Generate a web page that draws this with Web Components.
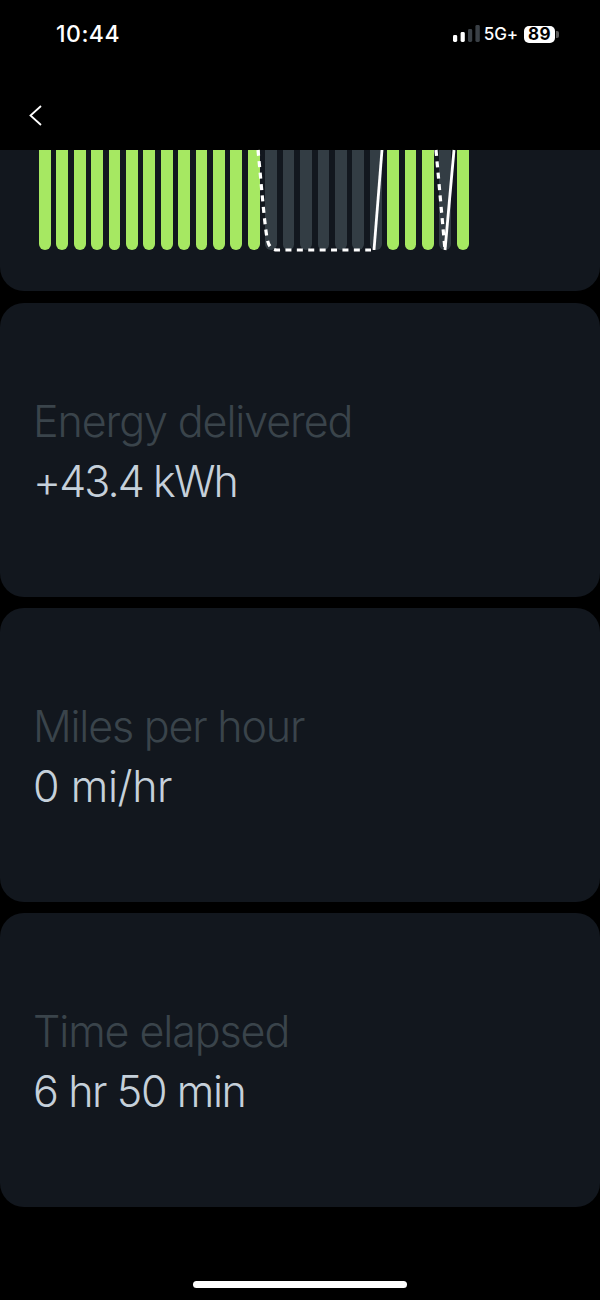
<!DOCTYPE html>
<html><head><meta charset="utf-8"><style>
html,body{margin:0;padding:0;background:#000}
body{width:600px;height:1300px;overflow:hidden;font-family:Inter,"Liberation Sans",sans-serif}
</style></head><body>
<app-screen>
  <status-bar></status-bar>
  <nav-bar></nav-bar>
  <chart-card></chart-card>
  <stat-card label="Energy delivered" value="+43.4 kWh" style="--ll:-1.1px;--lv:-1.9px"></stat-card>
  <stat-card label="Miles per hour" value="0 mi/hr" style="--ll:-1.2px;--lv:-.4px"></stat-card>
  <stat-card label="Time elapsed" value="6 hr 50 min" style="--ll:-1.1px;--lv:-1.4px"></stat-card>
  <home-indicator></home-indicator>
</app-screen>
<script>
function def(name, html, init){
  customElements.define(name, class extends HTMLElement{
    connectedCallback(){
      if(this.shadowRoot) return;
      const r=this.attachShadow({mode:'open'});
      r.innerHTML=html;
      if(init) init(r,this);
    }
  });
}
def('app-screen',`<style>:host{display:flex;flex-direction:column;width:600px;height:1300px;background:#000}</style><slot></slot>`);
def('status-bar',`<style>
:host{display:flex;align-items:center;justify-content:space-between;height:68px;box-sizing:border-box;padding:0 41px 0 56px;color:#fff;flex:none}
.t{font:500 23px/1 Inter,sans-serif;letter-spacing:.5px;opacity:.999}
.r{display:flex;align-items:center;height:68px}
.sig{display:block;margin-right:4px}
.g{font:500 17px/1 Inter,sans-serif;margin-right:6px;letter-spacing:-.1px;opacity:.999}
.bat{display:flex;align-items:center}
.pill{width:31px;height:17px;border-radius:5px;background:#fff;color:#000;font:700 17px/17px Inter,sans-serif;text-align:center;letter-spacing:.4px}
.nub{width:3px;height:7px;margin-left:1px;border-radius:0 2px 2px 0;background:#5a5a5a}
</style>
<span class="t">10:44</span>
<div class="r">
<svg class="sig" width="27" height="18" viewBox="0 0 27 18"><rect x="0" y="10" width="4.2" height="7" rx="1.4" fill="#fff"/><rect x="7.6" y="7" width="4.2" height="10" rx="1.4" fill="#fff"/><rect x="15" y="4" width="4.2" height="13" rx="1.4" fill="#3a4046"/><rect x="22.4" y="0" width="4.4" height="17" rx="1.4" fill="#3a4046"/></svg>
<span class="g">5G+</span>
<div class="bat"><div class="pill">89</div><div class="nub"></div></div>
</div>`);
def('nav-bar',`<style>:host{display:flex;align-items:flex-start;height:82px;padding:37px 0 0 29px;flex:none;box-sizing:border-box}svg{display:block}</style>
<svg width="13" height="21" viewBox="0 0 13 21"><path d="M12 1 L1.5 10.5 L12 20" fill="none" stroke="#fff" stroke-width="1.8"/></svg>`);
def('chart-bar',`<style>:host{display:block;width:11.8px;height:100px;background:var(--c);border-radius:0 0 6px 6px;flex:none}</style>`);
def('chart-card',`<style>
:host{display:block;height:141px;box-sizing:border-box;background:#12171e;border-radius:0 0 24px 24px;padding-left:39px;flex:none;margin-bottom:12px}
.wrap{position:relative;width:430px;height:100px}
.bars{display:flex;gap:5.62px;height:100px}
svg{position:absolute;left:0;top:0;overflow:visible}
</style>
<div class="wrap"><div class="bars"></div>
<svg width="430" height="102" viewBox="0 0 430 102" fill="none" stroke="#fff">
<path d="M219 0 C222 30 225 70 228 88 Q230 100 238 100 L332 100" stroke-width="3.2" stroke-dasharray="6 5.4"/>
<path d="M397 0 L406 100" stroke-width="3.2" stroke-dasharray="6 5.4"/>
<path d="M335 100 L343 0" stroke-width="2.8"/>
<path d="M406 100 L415 0" stroke-width="2.8"/>
</svg></div>`,r=>{
  const seq='GGGGGGGGGGGGGDDDDDDDGGGDG';
  const b=r.querySelector('.bars');
  for(const s of seq){const e=document.createElement('chart-bar');e.style.setProperty('--c',s=='G'?'#a6e862':'#333d44');b.append(e);}
});
def('stat-card',`<style>
:host{display:flex;flex-direction:column;justify-content:center;height:294px;box-sizing:border-box;background:#12171e;border-radius:24px;padding:2px 33px 0;flex:none;margin-bottom:11px}
.l{font:340 43px/60px Inter,sans-serif;color:#3a444b;letter-spacing:var(--ll);opacity:.999}
.v{font:340 43px/60px Inter,sans-serif;color:#c5d0da;letter-spacing:var(--lv);opacity:.999}
</style><div class="l"></div><div class="v"></div>`,(r,h)=>{
  r.querySelector('.l').textContent=h.getAttribute('label');
  r.querySelector('.v').textContent=h.getAttribute('value');
});
def('home-indicator',`<style>:host{display:flex;justify-content:center;padding-top:63px;flex:none}i{display:block;width:214px;height:7px;border-radius:4px;background:#fff}</style><i></i>`);
</script>
</body></html>
